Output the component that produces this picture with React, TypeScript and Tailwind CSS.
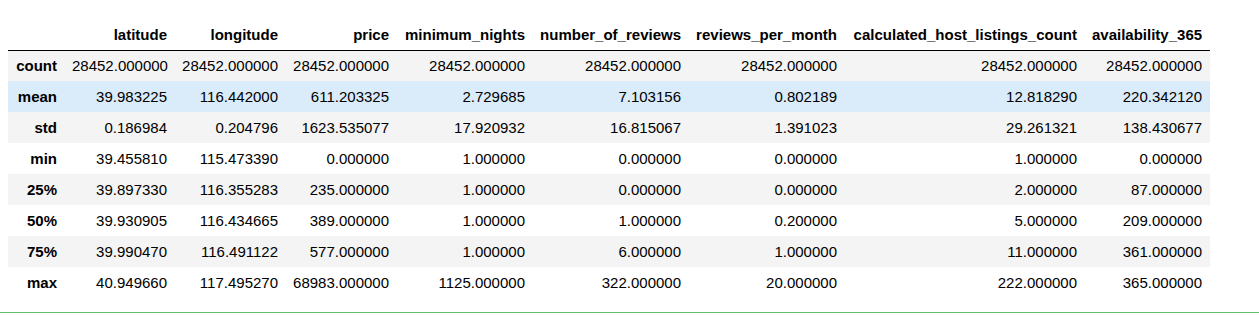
import React from "react";

const cols: [string, string][] = [
  ["latitude", "w-[110px]"],
  ["longitude", "w-[111px]"],
  ["price", "w-[111px]"],
  ["minimum_nights", "w-[136px]"],
  ["number_of_reviews", "w-[156px]"],
  ["reviews_per_month", "w-[156px]"],
  ["calculated_host_listings_count", "w-[240px]"],
  ["availability_365", "w-[125px]"],
];

const rows: [string, string[]][] = [
  ["count", ["28452.000000", "28452.000000", "28452.000000", "28452.000000", "28452.000000", "28452.000000", "28452.000000", "28452.000000"]],
  ["mean", ["39.983225", "116.442000", "611.203325", "2.729685", "7.103156", "0.802189", "12.818290", "220.342120"]],
  ["std", ["0.186984", "0.204796", "1623.535077", "17.920932", "16.815067", "1.391023", "29.261321", "138.430677"]],
  ["min", ["39.455810", "115.473390", "0.000000", "1.000000", "0.000000", "0.000000", "1.000000", "0.000000"]],
  ["25%", ["39.897330", "116.355283", "235.000000", "1.000000", "0.000000", "0.000000", "2.000000", "87.000000"]],
  ["50%", ["39.930905", "116.434665", "389.000000", "1.000000", "1.000000", "0.200000", "5.000000", "209.000000"]],
  ["75%", ["39.990470", "116.491122", "577.000000", "1.000000", "6.000000", "1.000000", "11.000000", "361.000000"]],
  ["max", ["40.949660", "117.495270", "68983.000000", "1125.000000", "322.000000", "20.000000", "222.000000", "365.000000"]],
];

export default function App() {
  return (
    <div
      className="w-[1259px] h-[315px] bg-white text-black flex flex-col"
      style={{ fontFamily: '"Liberation Sans", Arial, sans-serif' }}
    >
      <div className="pl-[8px] pt-[19px] h-[312px]">
        <table className="table-fixed w-[1202px] border-collapse text-[15px] leading-[17px]">
          <thead>
            <tr className="h-[31px] border-b border-black">
              <th className="w-[57px] px-[7px]"></th>
              {cols.map(([c, w]) => (
                <th key={c} className={w + " pl-[7px] pr-[8px] text-right font-bold whitespace-nowrap"}>
                  {c}
                </th>
              ))}
            </tr>
          </thead>
          <tbody>
            {rows.map(([name, vals], i) => (
              <tr
                key={name}
                className={
                  "h-[31px] " +
                  (name === "mean" ? "bg-[#daebfa]" : i % 2 === 0 ? "bg-[#f4f4f4]" : "bg-white")
                }
              >
                <th className="pl-[7px] pr-[8px] text-right font-bold whitespace-nowrap">{name}</th>
                {vals.map((v, j) => (
                  <td key={j} className="pl-[7px] pr-[8px] text-right whitespace-nowrap">
                    {v}
                  </td>
                ))}
              </tr>
            ))}
          </tbody>
        </table>
      </div>
      <div className="h-px w-full bg-[#66bb6a]"></div>
    </div>
  );
}
